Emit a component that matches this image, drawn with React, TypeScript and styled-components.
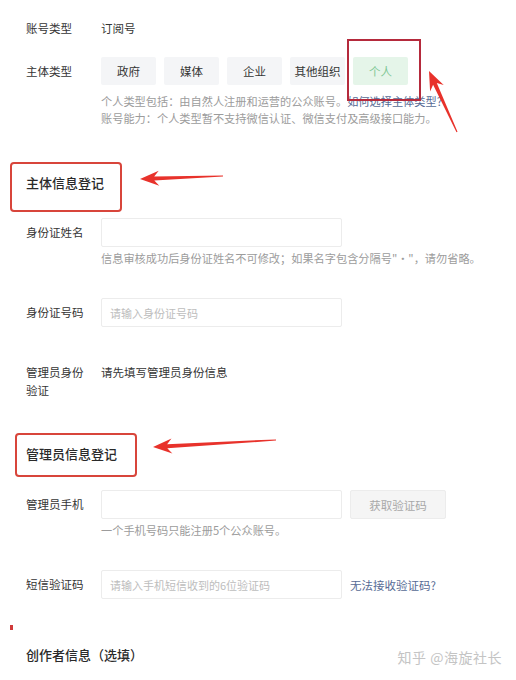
import React from 'react'
import styled, { createGlobalStyle } from 'styled-components'

const GlobalStyle = createGlobalStyle`
  html, body {
    margin: 0;
    padding: 0;
    background: #fff;
  }
  body {
    font-family: "Noto Sans CJK SC", "Noto Sans", sans-serif;
    color: #353535;
  }
`

const Page = styled.div`
  position: relative;
  width: 516px;
  height: 680px;
  overflow: hidden;
  padding: 19px 0 0 26px;
  box-sizing: border-box;
`

const Row = styled.div<{ $top: number }>`
  display: grid;
  grid-template-columns: 75px auto;
  margin-top: ${p => p.$top}px;
`

const Label = styled.div<{ $lh?: number }>`
  font-size: 11.5px;
  line-height: ${p => p.$lh ?? 18}px;
  padding-right: 12px;
  color: #353535;
`

const Value = styled.div<{ $link?: boolean }>`
  font-size: 11.5px;
  line-height: 18px;
  color: ${p => (p.$link ? '#576b95' : '#353535')};
`

const Field = styled.div`
  display: flex;
  flex-direction: column;
`

const Inline = styled.div`
  display: flex;
  align-items: center;
  gap: 8px;
`

const TypeButton = styled.div<{ $active?: boolean }>`
  width: 55px;
  height: 28px;
  display: flex;
  align-items: center;
  justify-content: center;
  font-size: 11.5px;
  border-radius: 2px;
  background: ${p => (p.$active ? '#e5f5e9' : '#f4f5f7')};
  color: ${p => (p.$active ? '#7ec795' : '#353535')};
`

const Help = styled.div<{ $top: number }>`
  font-size: 11.2px;
  line-height: 17px;
  color: #9c9c9c;
  white-space: nowrap;
  margin-top: ${p => p.$top}px;
`

const Link = styled.span`
  color: #576b95;
`

const Input = styled.div`
  width: 241px;
  height: 29px;
  box-sizing: border-box;
  border: 1px solid #ececec;
  border-radius: 2px;
  padding: 0 8px;
  display: flex;
  align-items: center;
  font-size: 11px;
  color: #bdbdbd;
  white-space: nowrap;
`

const CodeButton = styled.div`
  width: 96px;
  height: 29px;
  box-sizing: border-box;
  border: 1px solid #ececec;
  border-radius: 2px;
  background: #f5f5f5;
  display: flex;
  align-items: center;
  justify-content: center;
  font-size: 11.5px;
  color: #a8a8a8;
`

const Heading = styled.h2<{ $top: number }>`
  margin: ${p => p.$top}px 0 0 0;
  font-size: 13px;
  line-height: 20px;
  font-weight: 500;
  color: #2a2a2a;
`

const Note = styled.div`
  position: absolute;
  border: 2px solid #d8453b;
  border-radius: 4px;
  box-sizing: border-box;
`

const Marker = styled.div`
  position: absolute;
  border: 2px solid #b52a3c;
  box-sizing: border-box;
`

const Dot = styled.div`
  position: absolute;
  left: 10px;
  top: 625px;
  width: 3px;
  height: 5px;
  background: #d03a3a;
`

const Overlay = styled.svg`
  position: absolute;
  left: 0;
  top: 0;
  pointer-events: none;
`

const Watermark = styled.div`
  position: absolute;
  right: 14px;
  top: 647px;
  font-size: 14px;
  line-height: 20px;
  color: #c4c4c4;
  letter-spacing: 0.5px;
  text-shadow: 0 0 1px #fff;
`

type Pt = [number, number]

// tapered arrow polygon: thin at the tail, wide head at the tip
const arrowPoints = (tail: Pt, tip: Pt, headLen: number, headHalf: number, neck: number) => {
  const dx = tip[0] - tail[0]
  const dy = tip[1] - tail[1]
  const len = Math.hypot(dx, dy)
  const ux = dx / len
  const uy = dy / len
  const nx = -uy
  const ny = ux
  const bx = tip[0] - ux * headLen
  const by = tip[1] - uy * headLen
  const cx = tip[0] - ux * headLen * 0.75
  const cy = tip[1] - uy * headLen * 0.75
  const pts: Pt[] = [
    [tail[0] + nx * 0.6, tail[1] + ny * 0.6],
    [cx + nx * neck, cy + ny * neck],
    [bx + nx * headHalf, by + ny * headHalf],
    tip,
    [bx - nx * headHalf, by - ny * headHalf],
    [cx - nx * neck, cy - ny * neck],
    [tail[0] - nx * 0.6, tail[1] - ny * 0.6],
  ]
  return pts.map(p => `${p[0].toFixed(1)},${p[1].toFixed(1)}`).join(' ')
}

const arrows: { tail: Pt; tip: Pt }[] = [
  { tail: [457, 132], tip: [429, 71] },
  { tail: [223, 176], tip: [140, 179] },
  { tail: [276, 440], tip: [153, 447] },
]

const types = ['政府', '媒体', '企业', '其他组织', '个人']

const App = () => {
  return (
    <Page>
      <GlobalStyle />

      <Row $top={0}>
        <Label>账号类型</Label>
        <Value>订阅号</Value>
      </Row>

      <Row $top={20}>
        <Label $lh={28}>主体类型</Label>
        <Field>
          <Inline>
            {types.map(t => (
              <TypeButton key={t} $active={t === '个人'}>
                {t}
              </TypeButton>
            ))}
          </Inline>
          <Help $top={8}>
            个人类型包括：由自然人注册和运营的公众账号。<Link>如何选择主体类型?</Link>
            <br />
            账号能力：个人类型暂不支持微信认证、微信支付及高级接口能力。
          </Help>
        </Field>
      </Row>

      <Heading $top={46}>主体信息登记</Heading>

      <Row $top={25}>
        <Label $lh={29}>身份证姓名</Label>
        <Field>
          <Input />
          <Help $top={3}>信息审核成功后身份证姓名不可修改；如果名字包含分隔号"·"，请勿省略。</Help>
        </Field>
      </Row>

      <Row $top={31}>
        <Label $lh={29}>身份证号码</Label>
        <Input>请输入身份证号码</Input>
      </Row>

      <Row $top={36}>
        <Label>管理员身份验证</Label>
        <Value>请先填写管理员身份信息</Value>
      </Row>

      <Heading $top={45}>管理员信息登记</Heading>

      <Row $top={26}>
        <Label $lh={29}>管理员手机</Label>
        <Field>
          <Inline>
            <Input />
            <CodeButton>获取验证码</CodeButton>
          </Inline>
          <Help $top={3}>一个手机号码只能注册5个公众账号。</Help>
        </Field>
      </Row>

      <Row $top={31}>
        <Label $lh={29}>短信验证码</Label>
        <Inline>
          <Input>请输入手机短信收到的6位验证码</Input>
          <Value $link>无法接收验证码?</Value>
        </Inline>
      </Row>

      <Heading $top={46}>创作者信息（选填）</Heading>

      <Dot />
      <Marker style={{ left: 347, top: 39, width: 74, height: 62 }} />
      <Note style={{ left: 10, top: 162, width: 112, height: 50 }} />
      <Note style={{ left: 15, top: 433, width: 122, height: 44 }} />
      <Overlay width={516} height={680} viewBox="0 0 516 680">
        {arrows.map((a, i) => (
          <polygon key={i} points={arrowPoints(a.tail, a.tip, 19, 7.5, 2)} fill="#e8322b" />
        ))}
      </Overlay>
      <Watermark>知乎 @海旋社长</Watermark>
    </Page>
  )
}

export default App
